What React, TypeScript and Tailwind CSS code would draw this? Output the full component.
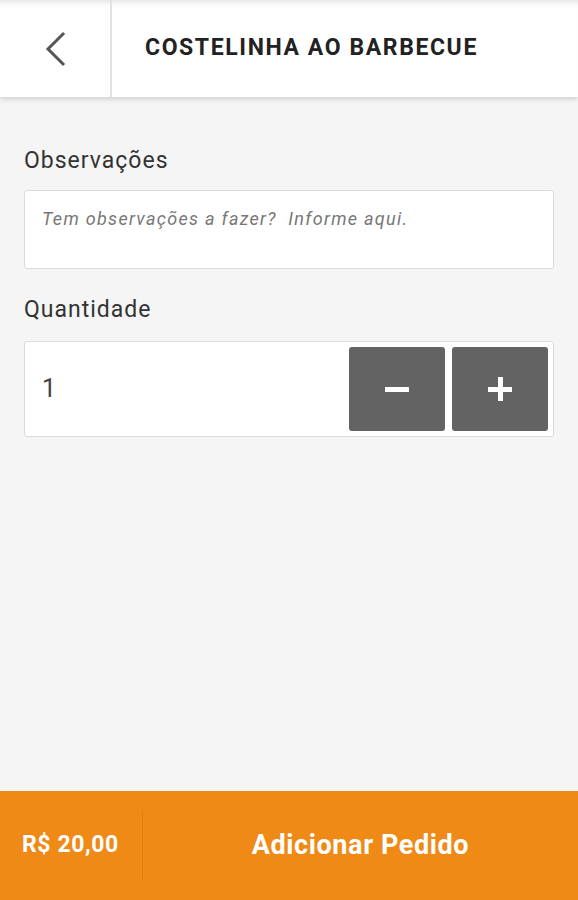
import React, { useState } from 'react';

export default function App() {
  const [qty, setQty] = useState(1);
  const [note, setNote] = useState('');

  return (
    <div className="flex flex-col h-[900px] w-full bg-[#f5f5f5] font-['Roboto',sans-serif]">
      {/* Header */}
      <div className="relative z-10 flex h-[97px] shrink-0 bg-white shadow-[inset_0_7px_6px_-5px_rgba(0,0,0,0.12),0_2px_5px_rgba(0,0,0,0.16)]">
        <button className="flex w-[112px] items-center justify-center border-r-2 border-[#e2e2e2]">
          <svg width="26" height="36" viewBox="0 0 26 36" fill="none">
            <path d="M21 3 L6 18 L21 33" stroke="#555" strokeWidth="3" strokeLinecap="square" />
          </svg>
        </button>
        <div className="flex items-center pl-[33px]">
          <h1 className="text-[23px] font-bold tracking-[1.6px] text-[#222]">COSTELINHA AO BARBECUE</h1>
        </div>
      </div>

      {/* Content */}
      <div className="flex-1 px-6 pt-[48px]">
        <label className="block text-[23px] leading-8 tracking-[1px] text-[#333]">Observações</label>
        <textarea
          value={note}
          onChange={(e) => setNote(e.target.value)}
          placeholder="Tem observações a fazer?  Informe aqui."
          className="mt-[13px] block h-[79px] w-full resize-none rounded-[3px] border border-[#dcdcdc] bg-white px-[17px] py-[14px] text-[18px] italic tracking-[1.3px] text-[#333] placeholder:text-[#777] outline-none"
        />

        <label className="mt-[25px] block text-[23px] leading-8 tracking-[1px] text-[#333]">Quantidade</label>
        <div className="mt-[15px] flex h-[96px] items-center rounded-[3px] border border-[#dcdcdc] bg-white pr-[5px]">
          <span className="flex-1 pl-[17px] text-[25px] text-[#444]">{qty}</span>
          <div className="flex gap-[7px]">
            <button
              onClick={() => setQty(Math.max(1, qty - 1))}
              className="flex h-[84px] w-[96px] items-center justify-center rounded-[3px] bg-[#636363]"
            >
              <span className="block h-[5px] w-[24px] bg-white" />
            </button>
            <button
              onClick={() => setQty(qty + 1)}
              className="relative flex h-[84px] w-[96px] items-center justify-center rounded-[3px] bg-[#636363]"
            >
              <span className="absolute h-[5px] w-[24px] bg-white" />
              <span className="absolute h-[24px] w-[5px] bg-white" />
            </button>
          </div>
        </div>
      </div>

      {/* Footer */}
      <div className="flex h-[109px] shrink-0 items-center bg-[#ef8a17]">
        <div className="flex h-[70px] w-[143px] items-center border-r border-[#e07e10] pl-[22px]">
          <span className="text-[23px] font-bold tracking-[0.6px] text-white">R$ {(qty * 20).toFixed(2).replace('.', ',')}</span>
        </div>
        <button className="flex flex-1 items-center justify-center text-[27px] font-bold tracking-[0.6px] text-white">
          Adicionar Pedido
        </button>
      </div>
    </div>
  );
}
